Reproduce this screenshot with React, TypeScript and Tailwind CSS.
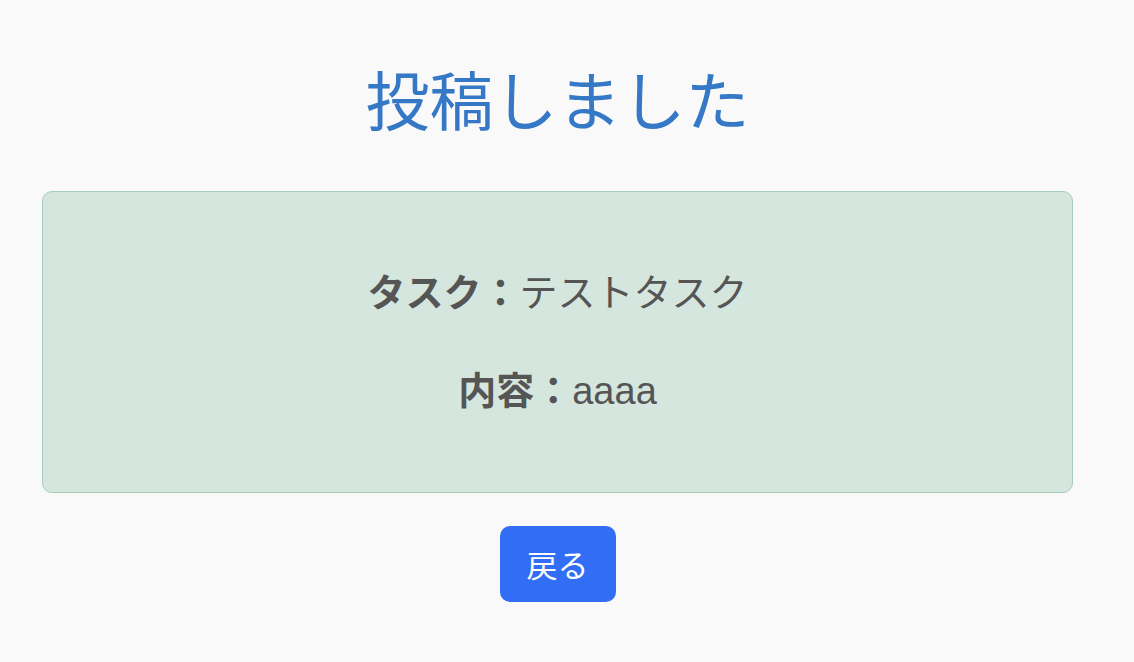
export default function App() {
  return (
    <div
      className="min-h-[662px] bg-[#f9f9f9] pl-[42px] pr-[61px] pt-[49px]"
      style={{ fontFamily: '"Noto Sans CJK JP", "Noto Sans", sans-serif' }}
    >
      <h1 className="text-center text-[64px] leading-[96px] font-normal text-[#3578c6]">
        投稿しました
      </h1>

      <div className="mt-[46px] flex h-[302px] flex-col items-center gap-[41px] rounded-[10px] border border-[#a6cdb9] bg-[#d5e6df] pt-[69px] text-[#555555]">
        <p className="text-[38px] leading-[57px]">
          <span className="font-bold">タスク：</span>テストタスク
        </p>
        <p className="text-[38px] leading-[57px]">
          <span className="font-bold">内容：</span>
          <span style={{ fontFamily: '"Liberation Sans", "Noto Sans CJK JP", sans-serif' }}>aaaa</span>
        </p>
      </div>

      <div className="mt-[33px] flex justify-center">
        <button className="h-[76px] w-[116px] rounded-[10px] bg-[#316ef5] text-[31px] text-white">
          戻る
        </button>
      </div>
    </div>
  );
}
